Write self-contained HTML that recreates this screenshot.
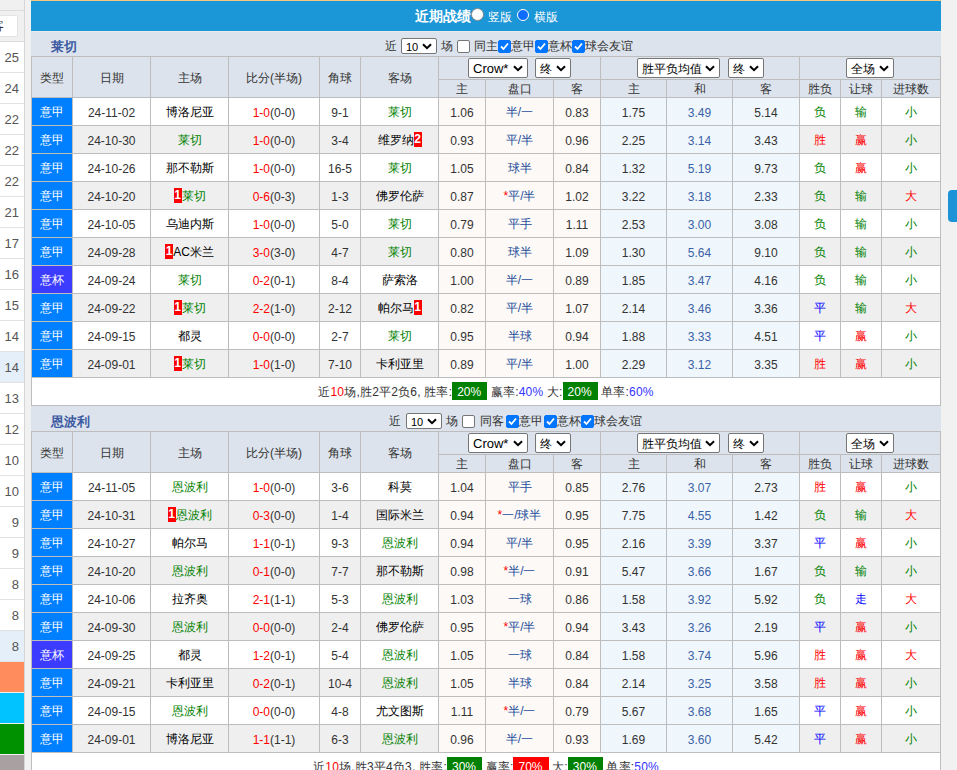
<!DOCTYPE html><html><head><meta charset="utf-8"><style>
*{margin:0;padding:0;box-sizing:border-box}
html,body{width:957px;height:770px;overflow:hidden;background:#f1f1f1;font-family:"Liberation Sans",sans-serif;font-size:12px;color:#333;position:relative}
div{position:absolute}
.c{text-align:center;white-space:nowrap;overflow:hidden;padding-top:1px}
.dt,.od,.od2{padding-top:2px}
.hd{color:#333}
.ty{color:#fff}
.tm{color:#000}
.hc{color:#1f4f9b}
.od2{color:#3a62a6}
.rc{font-style:normal;background:#f00;color:#fff;font-weight:bold;display:inline-block;line-height:15px;width:8px;text-align:center;vertical-align:1px}
.grid{left:31px;width:910px;background:#bdbdbd}
.bar{left:31px;width:910px;height:24px;background:#dce3ec}
.tname{left:51px;height:25px;line-height:32px;font-size:13px;font-weight:bold;color:#3d5ba3}
.tt{height:24px;line-height:30px;color:#333;white-space:nowrap}
.sel{height:16px;border:1px solid #767676;border-radius:2px;background:#fff;line-height:14px;padding-left:4px;color:#000;white-space:nowrap}
.sel span{position:relative;top:1px}
.sel svg{position:absolute;right:4px;top:50%;margin-top:-3px}
.cb{width:13px;height:13px;border:1px solid #767676;border-radius:2px;background:#fff}
.cb.on{background:#0075ff;border-color:#0075ff}
.cb svg{position:absolute;left:-1px;top:-1px}
.gbox{display:inline-block;background:#008000;color:#fff;padding:1px 6px 0 5px;height:18px;line-height:18px;vertical-align:top;position:relative;top:3px;font-size:12px;letter-spacing:0}
.sum{letter-spacing:0.2px;padding-top:1px}
.lp{left:0;width:24px;height:31px;line-height:31px;text-align:right;padding-right:5px;color:#555;font-size:13px;border-bottom:1px solid #e2e2e2;background:#fff}
</style></head><body>
<div style="left:0;top:0;width:24px;height:770px;background:#f0f0f0"></div>
<div style="left:0;top:10px;width:24px;height:1px;background:#dcdcdc"></div>
<div style="left:-10px;top:15px;width:28px;height:22px;background:#fff;border:1px solid #e4e4e4;border-radius:2px"></div>
<div style="left:-8px;top:15px;height:22px;line-height:22px;font-size:12px;color:#333">客</div>
<div style="left:0;top:41px;width:24px;height:1px;background:#dcdcdc"></div>
<div class="lp" style="top:42px;background:#fff;height:31px">25</div>
<div class="lp" style="top:73px;background:#fff;height:31px">24</div>
<div class="lp" style="top:104px;background:#fff;height:31px">22</div>
<div class="lp" style="top:135px;background:#fff;height:31px">22</div>
<div class="lp" style="top:166px;background:#fff;height:31px">22</div>
<div class="lp" style="top:197px;background:#fff;height:31px">21</div>
<div class="lp" style="top:228px;background:#fff;height:31px">17</div>
<div class="lp" style="top:259px;background:#fff;height:31px">16</div>
<div class="lp" style="top:290px;background:#fff;height:31px">15</div>
<div class="lp" style="top:321px;background:#fff;height:31px">14</div>
<div class="lp" style="top:352px;background:#e4effa;height:31px">14</div>
<div class="lp" style="top:383px;background:#fff;height:31px">13</div>
<div class="lp" style="top:414px;background:#fff;height:31px">12</div>
<div class="lp" style="top:445px;background:#fff;height:31px">10</div>
<div class="lp" style="top:476px;background:#fff;height:31px">10</div>
<div class="lp" style="top:507px;background:#fff;height:31px">9</div>
<div class="lp" style="top:538px;background:#fff;height:31px">9</div>
<div class="lp" style="top:569px;background:#fff;height:31px">8</div>
<div class="lp" style="top:600px;background:#fff;height:31px">8</div>
<div class="lp" style="top:631px;background:#e4effa;height:31px">8</div>
<div style="left:0;top:662px;width:24px;height:30px;background:#ff8c5c"></div>
<div style="left:0;top:693px;width:24px;height:30px;background:#00c3ff"></div>
<div style="left:0;top:724px;width:24px;height:30px;background:#009100"></div>
<div style="left:0;top:755px;width:24px;height:30px;background:#a9a1a1"></div>
<div style="left:24px;top:0;width:1px;height:770px;background:#d6d6d6"></div>
<div style="left:31px;top:0;width:910px;height:1px;background:#f6c77d"></div>
<div style="left:31px;top:1px;width:910px;height:30px;background:#1b96d6"></div>
<div style="left:415px;top:1px;height:30px;line-height:30px;font-size:14px;font-weight:bold;color:#fff;white-space:nowrap">近期战绩</div>
<div style="left:471px;top:8px;width:13px;height:13px;border-radius:50%;background:#fff;border:1px solid #888"></div>
<div style="left:488px;top:2px;height:30px;line-height:30px;font-size:12px;color:#fff;white-space:nowrap">竖版</div>
<div style="left:517px;top:9px;width:12px;height:12px;border-radius:50%;background:#0b6cff;border:1.5px solid #fff"></div>
<div style="left:534px;top:2px;height:30px;line-height:30px;font-size:12px;color:#fff;white-space:nowrap">横版</div>
<div class="bar" style="top:31px;height:25px"></div>
<div class="tname" style="top:31px;">莱切</div>
<div class="tt" style="left:385px;top:31px">近</div>
<div class="sel" style="left:401px;top:38px;width:36px;height:16px;line-height:14px;font-size:11px"><span>10</span><svg width="10" height="7" viewBox="0 0 10 7"><path d="M1 1.2 L5 5.2 L9 1.2" fill="none" stroke="#000" stroke-width="2"/></svg></div>
<div class="tt" style="left:441px;top:31px">场</div>
<div class="cb" style="left:457px;top:40px"></div>
<div class="tt" style="left:474px;top:31px">同主</div>
<div class="cb on" style="left:498px;top:40px"><svg width="13" height="13" viewBox="0 0 13 13"><path d="M3 6.5 L5.5 9 L10 3.5" fill="none" stroke="#fff" stroke-width="1.8"/></svg></div>
<div class="tt" style="left:511px;top:31px">意甲</div>
<div class="cb on" style="left:535px;top:40px"><svg width="13" height="13" viewBox="0 0 13 13"><path d="M3 6.5 L5.5 9 L10 3.5" fill="none" stroke="#fff" stroke-width="1.8"/></svg></div>
<div class="tt" style="left:548px;top:31px">意杯</div>
<div class="cb on" style="left:572px;top:40px"><svg width="13" height="13" viewBox="0 0 13 13"><path d="M3 6.5 L5.5 9 L10 3.5" fill="none" stroke="#fff" stroke-width="1.8"/></svg></div>
<div class="tt" style="left:585px;top:31px">球会友谊</div>
<div class="grid" style="top:56px;height:350px"></div>
<div class="c hd" style="left:32px;top:57px;width:40px;height:40px;line-height:40px;background:#dce3ec;">类型</div>
<div class="c hd" style="left:73px;top:57px;width:77px;height:40px;line-height:40px;background:#dce3ec;">日期</div>
<div class="c hd" style="left:151px;top:57px;width:77px;height:40px;line-height:40px;background:#dce3ec;">主场</div>
<div class="c hd" style="left:229px;top:57px;width:90px;height:40px;line-height:40px;background:#dce3ec;">比分(半场)</div>
<div class="c hd" style="left:320px;top:57px;width:40px;height:40px;line-height:40px;background:#dce3ec;">角球</div>
<div class="c hd" style="left:361px;top:57px;width:77px;height:40px;line-height:40px;background:#dce3ec;">客场</div>
<div class="c " style="left:439px;top:57px;width:161px;height:22px;line-height:22px;background:#dce3ec;"></div>
<div class="c " style="left:601px;top:57px;width:198px;height:22px;line-height:22px;background:#dce3ec;"></div>
<div class="c " style="left:800px;top:57px;width:140px;height:22px;line-height:22px;background:#dce3ec;"></div>
<div class="c hd" style="left:439px;top:80px;width:46px;height:17px;line-height:17px;background:#dce3ec;">主</div>
<div class="c hd" style="left:486px;top:80px;width:67px;height:17px;line-height:17px;background:#dce3ec;">盘口</div>
<div class="c hd" style="left:554px;top:80px;width:46px;height:17px;line-height:17px;background:#dce3ec;">客</div>
<div class="c hd" style="left:601px;top:80px;width:65px;height:17px;line-height:17px;background:#dce3ec;">主</div>
<div class="c hd" style="left:667px;top:80px;width:65px;height:17px;line-height:17px;background:#dce3ec;">和</div>
<div class="c hd" style="left:733px;top:80px;width:66px;height:17px;line-height:17px;background:#dce3ec;">客</div>
<div class="c hd" style="left:800px;top:80px;width:40px;height:17px;line-height:17px;background:#dce3ec;">胜负</div>
<div class="c hd" style="left:841px;top:80px;width:40px;height:17px;line-height:17px;background:#dce3ec;">让球</div>
<div class="c hd" style="left:882px;top:80px;width:58px;height:17px;line-height:17px;background:#dce3ec;">进球数</div>
<div class="c ty" style="left:32px;top:98px;width:40px;height:27px;line-height:27px;background:#0080ff;">意甲</div>
<div class="c dt" style="left:73px;top:98px;width:77px;height:27px;line-height:27px;background:#fff;">24-11-02</div>
<div class="c tm" style="left:151px;top:98px;width:77px;height:27px;line-height:27px;background:#fff;">博洛尼亚</div>
<div class="c dt" style="left:229px;top:98px;width:90px;height:27px;line-height:27px;background:#fff;"><span style="color:#f00">1-0</span>(0-0)</div>
<div class="c dt" style="left:320px;top:98px;width:40px;height:27px;line-height:27px;background:#fff;">9-1</div>
<div class="c tm" style="left:361px;top:98px;width:77px;height:27px;line-height:27px;background:#fff;"><span style="color:#008000">莱切</span></div>
<div class="c od" style="left:439px;top:98px;width:46px;height:27px;line-height:27px;background:#fdf9f6;">1.06</div>
<div class="c hc" style="left:486px;top:98px;width:67px;height:27px;line-height:27px;background:#fdf9f6;">半/一</div>
<div class="c od" style="left:554px;top:98px;width:46px;height:27px;line-height:27px;background:#fdf9f6;">0.83</div>
<div class="c od" style="left:601px;top:98px;width:65px;height:27px;line-height:27px;background:#f0f7fc;">1.75</div>
<div class="c od2" style="left:667px;top:98px;width:65px;height:27px;line-height:27px;background:#f0f7fc;">3.49</div>
<div class="c od" style="left:733px;top:98px;width:66px;height:27px;line-height:27px;background:#f0f7fc;">5.14</div>
<div class="c rs" style="left:800px;top:98px;width:40px;height:27px;line-height:27px;background:#fff;"><span style="color:#008000">负</span></div>
<div class="c rs" style="left:841px;top:98px;width:40px;height:27px;line-height:27px;background:#fff;"><span style="color:#008000">输</span></div>
<div class="c rs" style="left:882px;top:98px;width:58px;height:27px;line-height:27px;background:#fff;"><span style="color:#008000">小</span></div>
<div class="c ty" style="left:32px;top:126px;width:40px;height:27px;line-height:27px;background:#0080ff;">意甲</div>
<div class="c dt" style="left:73px;top:126px;width:77px;height:27px;line-height:27px;background:#efefef;">24-10-30</div>
<div class="c tm" style="left:151px;top:126px;width:77px;height:27px;line-height:27px;background:#efefef;"><span style="color:#008000">莱切</span></div>
<div class="c dt" style="left:229px;top:126px;width:90px;height:27px;line-height:27px;background:#efefef;"><span style="color:#f00">1-0</span>(0-0)</div>
<div class="c dt" style="left:320px;top:126px;width:40px;height:27px;line-height:27px;background:#efefef;">3-4</div>
<div class="c tm" style="left:361px;top:126px;width:77px;height:27px;line-height:27px;background:#efefef;">维罗纳<i class="rc">2</i></div>
<div class="c od" style="left:439px;top:126px;width:46px;height:27px;line-height:27px;background:#fdf9f6;">0.93</div>
<div class="c hc" style="left:486px;top:126px;width:67px;height:27px;line-height:27px;background:#fdf9f6;">平/半</div>
<div class="c od" style="left:554px;top:126px;width:46px;height:27px;line-height:27px;background:#fdf9f6;">0.96</div>
<div class="c od" style="left:601px;top:126px;width:65px;height:27px;line-height:27px;background:#f0f7fc;">2.25</div>
<div class="c od2" style="left:667px;top:126px;width:65px;height:27px;line-height:27px;background:#f0f7fc;">3.14</div>
<div class="c od" style="left:733px;top:126px;width:66px;height:27px;line-height:27px;background:#f0f7fc;">3.43</div>
<div class="c rs" style="left:800px;top:126px;width:40px;height:27px;line-height:27px;background:#efefef;"><span style="color:#f00">胜</span></div>
<div class="c rs" style="left:841px;top:126px;width:40px;height:27px;line-height:27px;background:#efefef;"><span style="color:#f00">赢</span></div>
<div class="c rs" style="left:882px;top:126px;width:58px;height:27px;line-height:27px;background:#efefef;"><span style="color:#008000">小</span></div>
<div class="c ty" style="left:32px;top:154px;width:40px;height:27px;line-height:27px;background:#0080ff;">意甲</div>
<div class="c dt" style="left:73px;top:154px;width:77px;height:27px;line-height:27px;background:#fff;">24-10-26</div>
<div class="c tm" style="left:151px;top:154px;width:77px;height:27px;line-height:27px;background:#fff;">那不勒斯</div>
<div class="c dt" style="left:229px;top:154px;width:90px;height:27px;line-height:27px;background:#fff;"><span style="color:#f00">1-0</span>(0-0)</div>
<div class="c dt" style="left:320px;top:154px;width:40px;height:27px;line-height:27px;background:#fff;">16-5</div>
<div class="c tm" style="left:361px;top:154px;width:77px;height:27px;line-height:27px;background:#fff;"><span style="color:#008000">莱切</span></div>
<div class="c od" style="left:439px;top:154px;width:46px;height:27px;line-height:27px;background:#fdf9f6;">1.05</div>
<div class="c hc" style="left:486px;top:154px;width:67px;height:27px;line-height:27px;background:#fdf9f6;">球半</div>
<div class="c od" style="left:554px;top:154px;width:46px;height:27px;line-height:27px;background:#fdf9f6;">0.84</div>
<div class="c od" style="left:601px;top:154px;width:65px;height:27px;line-height:27px;background:#f0f7fc;">1.32</div>
<div class="c od2" style="left:667px;top:154px;width:65px;height:27px;line-height:27px;background:#f0f7fc;">5.19</div>
<div class="c od" style="left:733px;top:154px;width:66px;height:27px;line-height:27px;background:#f0f7fc;">9.73</div>
<div class="c rs" style="left:800px;top:154px;width:40px;height:27px;line-height:27px;background:#fff;"><span style="color:#008000">负</span></div>
<div class="c rs" style="left:841px;top:154px;width:40px;height:27px;line-height:27px;background:#fff;"><span style="color:#f00">赢</span></div>
<div class="c rs" style="left:882px;top:154px;width:58px;height:27px;line-height:27px;background:#fff;"><span style="color:#008000">小</span></div>
<div class="c ty" style="left:32px;top:182px;width:40px;height:27px;line-height:27px;background:#0080ff;">意甲</div>
<div class="c dt" style="left:73px;top:182px;width:77px;height:27px;line-height:27px;background:#efefef;">24-10-20</div>
<div class="c tm" style="left:151px;top:182px;width:77px;height:27px;line-height:27px;background:#efefef;"><i class="rc">1</i><span style="color:#008000">莱切</span></div>
<div class="c dt" style="left:229px;top:182px;width:90px;height:27px;line-height:27px;background:#efefef;"><span style="color:#f00">0-6</span>(0-3)</div>
<div class="c dt" style="left:320px;top:182px;width:40px;height:27px;line-height:27px;background:#efefef;">1-3</div>
<div class="c tm" style="left:361px;top:182px;width:77px;height:27px;line-height:27px;background:#efefef;">佛罗伦萨</div>
<div class="c od" style="left:439px;top:182px;width:46px;height:27px;line-height:27px;background:#fdf9f6;">0.87</div>
<div class="c hc" style="left:486px;top:182px;width:67px;height:27px;line-height:27px;background:#fdf9f6;"><span style="color:#f00">*</span>平/半</div>
<div class="c od" style="left:554px;top:182px;width:46px;height:27px;line-height:27px;background:#fdf9f6;">1.02</div>
<div class="c od" style="left:601px;top:182px;width:65px;height:27px;line-height:27px;background:#f0f7fc;">3.22</div>
<div class="c od2" style="left:667px;top:182px;width:65px;height:27px;line-height:27px;background:#f0f7fc;">3.18</div>
<div class="c od" style="left:733px;top:182px;width:66px;height:27px;line-height:27px;background:#f0f7fc;">2.33</div>
<div class="c rs" style="left:800px;top:182px;width:40px;height:27px;line-height:27px;background:#efefef;"><span style="color:#008000">负</span></div>
<div class="c rs" style="left:841px;top:182px;width:40px;height:27px;line-height:27px;background:#efefef;"><span style="color:#008000">输</span></div>
<div class="c rs" style="left:882px;top:182px;width:58px;height:27px;line-height:27px;background:#efefef;"><span style="color:#f00">大</span></div>
<div class="c ty" style="left:32px;top:210px;width:40px;height:27px;line-height:27px;background:#0080ff;">意甲</div>
<div class="c dt" style="left:73px;top:210px;width:77px;height:27px;line-height:27px;background:#fff;">24-10-05</div>
<div class="c tm" style="left:151px;top:210px;width:77px;height:27px;line-height:27px;background:#fff;">乌迪内斯</div>
<div class="c dt" style="left:229px;top:210px;width:90px;height:27px;line-height:27px;background:#fff;"><span style="color:#f00">1-0</span>(0-0)</div>
<div class="c dt" style="left:320px;top:210px;width:40px;height:27px;line-height:27px;background:#fff;">5-0</div>
<div class="c tm" style="left:361px;top:210px;width:77px;height:27px;line-height:27px;background:#fff;"><span style="color:#008000">莱切</span></div>
<div class="c od" style="left:439px;top:210px;width:46px;height:27px;line-height:27px;background:#fdf9f6;">0.79</div>
<div class="c hc" style="left:486px;top:210px;width:67px;height:27px;line-height:27px;background:#fdf9f6;">平手</div>
<div class="c od" style="left:554px;top:210px;width:46px;height:27px;line-height:27px;background:#fdf9f6;">1.11</div>
<div class="c od" style="left:601px;top:210px;width:65px;height:27px;line-height:27px;background:#f0f7fc;">2.53</div>
<div class="c od2" style="left:667px;top:210px;width:65px;height:27px;line-height:27px;background:#f0f7fc;">3.00</div>
<div class="c od" style="left:733px;top:210px;width:66px;height:27px;line-height:27px;background:#f0f7fc;">3.08</div>
<div class="c rs" style="left:800px;top:210px;width:40px;height:27px;line-height:27px;background:#fff;"><span style="color:#008000">负</span></div>
<div class="c rs" style="left:841px;top:210px;width:40px;height:27px;line-height:27px;background:#fff;"><span style="color:#008000">输</span></div>
<div class="c rs" style="left:882px;top:210px;width:58px;height:27px;line-height:27px;background:#fff;"><span style="color:#008000">小</span></div>
<div class="c ty" style="left:32px;top:238px;width:40px;height:27px;line-height:27px;background:#0080ff;">意甲</div>
<div class="c dt" style="left:73px;top:238px;width:77px;height:27px;line-height:27px;background:#efefef;">24-09-28</div>
<div class="c tm" style="left:151px;top:238px;width:77px;height:27px;line-height:27px;background:#efefef;"><i class="rc">1</i>AC米兰</div>
<div class="c dt" style="left:229px;top:238px;width:90px;height:27px;line-height:27px;background:#efefef;"><span style="color:#f00">3-0</span>(3-0)</div>
<div class="c dt" style="left:320px;top:238px;width:40px;height:27px;line-height:27px;background:#efefef;">4-7</div>
<div class="c tm" style="left:361px;top:238px;width:77px;height:27px;line-height:27px;background:#efefef;"><span style="color:#008000">莱切</span></div>
<div class="c od" style="left:439px;top:238px;width:46px;height:27px;line-height:27px;background:#fdf9f6;">0.80</div>
<div class="c hc" style="left:486px;top:238px;width:67px;height:27px;line-height:27px;background:#fdf9f6;">球半</div>
<div class="c od" style="left:554px;top:238px;width:46px;height:27px;line-height:27px;background:#fdf9f6;">1.09</div>
<div class="c od" style="left:601px;top:238px;width:65px;height:27px;line-height:27px;background:#f0f7fc;">1.30</div>
<div class="c od2" style="left:667px;top:238px;width:65px;height:27px;line-height:27px;background:#f0f7fc;">5.64</div>
<div class="c od" style="left:733px;top:238px;width:66px;height:27px;line-height:27px;background:#f0f7fc;">9.10</div>
<div class="c rs" style="left:800px;top:238px;width:40px;height:27px;line-height:27px;background:#efefef;"><span style="color:#008000">负</span></div>
<div class="c rs" style="left:841px;top:238px;width:40px;height:27px;line-height:27px;background:#efefef;"><span style="color:#008000">输</span></div>
<div class="c rs" style="left:882px;top:238px;width:58px;height:27px;line-height:27px;background:#efefef;"><span style="color:#008000">小</span></div>
<div class="c ty" style="left:32px;top:266px;width:40px;height:27px;line-height:27px;background:#3c3cff;">意杯</div>
<div class="c dt" style="left:73px;top:266px;width:77px;height:27px;line-height:27px;background:#fff;">24-09-24</div>
<div class="c tm" style="left:151px;top:266px;width:77px;height:27px;line-height:27px;background:#fff;"><span style="color:#008000">莱切</span></div>
<div class="c dt" style="left:229px;top:266px;width:90px;height:27px;line-height:27px;background:#fff;"><span style="color:#f00">0-2</span>(0-1)</div>
<div class="c dt" style="left:320px;top:266px;width:40px;height:27px;line-height:27px;background:#fff;">8-4</div>
<div class="c tm" style="left:361px;top:266px;width:77px;height:27px;line-height:27px;background:#fff;">萨索洛</div>
<div class="c od" style="left:439px;top:266px;width:46px;height:27px;line-height:27px;background:#fdf9f6;">1.00</div>
<div class="c hc" style="left:486px;top:266px;width:67px;height:27px;line-height:27px;background:#fdf9f6;">半/一</div>
<div class="c od" style="left:554px;top:266px;width:46px;height:27px;line-height:27px;background:#fdf9f6;">0.89</div>
<div class="c od" style="left:601px;top:266px;width:65px;height:27px;line-height:27px;background:#f0f7fc;">1.85</div>
<div class="c od2" style="left:667px;top:266px;width:65px;height:27px;line-height:27px;background:#f0f7fc;">3.47</div>
<div class="c od" style="left:733px;top:266px;width:66px;height:27px;line-height:27px;background:#f0f7fc;">4.16</div>
<div class="c rs" style="left:800px;top:266px;width:40px;height:27px;line-height:27px;background:#fff;"><span style="color:#008000">负</span></div>
<div class="c rs" style="left:841px;top:266px;width:40px;height:27px;line-height:27px;background:#fff;"><span style="color:#008000">输</span></div>
<div class="c rs" style="left:882px;top:266px;width:58px;height:27px;line-height:27px;background:#fff;"><span style="color:#008000">小</span></div>
<div class="c ty" style="left:32px;top:294px;width:40px;height:27px;line-height:27px;background:#0080ff;">意甲</div>
<div class="c dt" style="left:73px;top:294px;width:77px;height:27px;line-height:27px;background:#efefef;">24-09-22</div>
<div class="c tm" style="left:151px;top:294px;width:77px;height:27px;line-height:27px;background:#efefef;"><i class="rc">1</i><span style="color:#008000">莱切</span></div>
<div class="c dt" style="left:229px;top:294px;width:90px;height:27px;line-height:27px;background:#efefef;"><span style="color:#f00">2-2</span>(1-0)</div>
<div class="c dt" style="left:320px;top:294px;width:40px;height:27px;line-height:27px;background:#efefef;">2-12</div>
<div class="c tm" style="left:361px;top:294px;width:77px;height:27px;line-height:27px;background:#efefef;">帕尔马<i class="rc">1</i></div>
<div class="c od" style="left:439px;top:294px;width:46px;height:27px;line-height:27px;background:#fdf9f6;">0.82</div>
<div class="c hc" style="left:486px;top:294px;width:67px;height:27px;line-height:27px;background:#fdf9f6;">平/半</div>
<div class="c od" style="left:554px;top:294px;width:46px;height:27px;line-height:27px;background:#fdf9f6;">1.07</div>
<div class="c od" style="left:601px;top:294px;width:65px;height:27px;line-height:27px;background:#f0f7fc;">2.14</div>
<div class="c od2" style="left:667px;top:294px;width:65px;height:27px;line-height:27px;background:#f0f7fc;">3.46</div>
<div class="c od" style="left:733px;top:294px;width:66px;height:27px;line-height:27px;background:#f0f7fc;">3.36</div>
<div class="c rs" style="left:800px;top:294px;width:40px;height:27px;line-height:27px;background:#efefef;"><span style="color:#00f">平</span></div>
<div class="c rs" style="left:841px;top:294px;width:40px;height:27px;line-height:27px;background:#efefef;"><span style="color:#008000">输</span></div>
<div class="c rs" style="left:882px;top:294px;width:58px;height:27px;line-height:27px;background:#efefef;"><span style="color:#f00">大</span></div>
<div class="c ty" style="left:32px;top:322px;width:40px;height:27px;line-height:27px;background:#0080ff;">意甲</div>
<div class="c dt" style="left:73px;top:322px;width:77px;height:27px;line-height:27px;background:#fff;">24-09-15</div>
<div class="c tm" style="left:151px;top:322px;width:77px;height:27px;line-height:27px;background:#fff;">都灵</div>
<div class="c dt" style="left:229px;top:322px;width:90px;height:27px;line-height:27px;background:#fff;"><span style="color:#f00">0-0</span>(0-0)</div>
<div class="c dt" style="left:320px;top:322px;width:40px;height:27px;line-height:27px;background:#fff;">2-7</div>
<div class="c tm" style="left:361px;top:322px;width:77px;height:27px;line-height:27px;background:#fff;"><span style="color:#008000">莱切</span></div>
<div class="c od" style="left:439px;top:322px;width:46px;height:27px;line-height:27px;background:#fdf9f6;">0.95</div>
<div class="c hc" style="left:486px;top:322px;width:67px;height:27px;line-height:27px;background:#fdf9f6;">半球</div>
<div class="c od" style="left:554px;top:322px;width:46px;height:27px;line-height:27px;background:#fdf9f6;">0.94</div>
<div class="c od" style="left:601px;top:322px;width:65px;height:27px;line-height:27px;background:#f0f7fc;">1.88</div>
<div class="c od2" style="left:667px;top:322px;width:65px;height:27px;line-height:27px;background:#f0f7fc;">3.33</div>
<div class="c od" style="left:733px;top:322px;width:66px;height:27px;line-height:27px;background:#f0f7fc;">4.51</div>
<div class="c rs" style="left:800px;top:322px;width:40px;height:27px;line-height:27px;background:#fff;"><span style="color:#00f">平</span></div>
<div class="c rs" style="left:841px;top:322px;width:40px;height:27px;line-height:27px;background:#fff;"><span style="color:#f00">赢</span></div>
<div class="c rs" style="left:882px;top:322px;width:58px;height:27px;line-height:27px;background:#fff;"><span style="color:#008000">小</span></div>
<div class="c ty" style="left:32px;top:350px;width:40px;height:27px;line-height:27px;background:#0080ff;">意甲</div>
<div class="c dt" style="left:73px;top:350px;width:77px;height:27px;line-height:27px;background:#efefef;">24-09-01</div>
<div class="c tm" style="left:151px;top:350px;width:77px;height:27px;line-height:27px;background:#efefef;"><i class="rc">1</i><span style="color:#008000">莱切</span></div>
<div class="c dt" style="left:229px;top:350px;width:90px;height:27px;line-height:27px;background:#efefef;"><span style="color:#f00">1-0</span>(1-0)</div>
<div class="c dt" style="left:320px;top:350px;width:40px;height:27px;line-height:27px;background:#efefef;">7-10</div>
<div class="c tm" style="left:361px;top:350px;width:77px;height:27px;line-height:27px;background:#efefef;">卡利亚里</div>
<div class="c od" style="left:439px;top:350px;width:46px;height:27px;line-height:27px;background:#fdf9f6;">0.89</div>
<div class="c hc" style="left:486px;top:350px;width:67px;height:27px;line-height:27px;background:#fdf9f6;">平/半</div>
<div class="c od" style="left:554px;top:350px;width:46px;height:27px;line-height:27px;background:#fdf9f6;">1.00</div>
<div class="c od" style="left:601px;top:350px;width:65px;height:27px;line-height:27px;background:#f0f7fc;">2.29</div>
<div class="c od2" style="left:667px;top:350px;width:65px;height:27px;line-height:27px;background:#f0f7fc;">3.12</div>
<div class="c od" style="left:733px;top:350px;width:66px;height:27px;line-height:27px;background:#f0f7fc;">3.35</div>
<div class="c rs" style="left:800px;top:350px;width:40px;height:27px;line-height:27px;background:#efefef;"><span style="color:#f00">胜</span></div>
<div class="c rs" style="left:841px;top:350px;width:40px;height:27px;line-height:27px;background:#efefef;"><span style="color:#f00">赢</span></div>
<div class="c rs" style="left:882px;top:350px;width:58px;height:27px;line-height:27px;background:#efefef;"><span style="color:#008000">小</span></div>
<div class="c sum" style="left:32px;top:378px;width:908px;height:27px;line-height:27px;background:#fff;">近<span style="color:#f00">10</span>场,胜2平2负6, 胜率:<span class="gbox">20%</span> 赢率:<span style="color:#33f">40%</span> 大:<span class="gbox">20%</span> 单率:<span style="color:#33f">60%</span></div>
<div class="bar" style="top:406px;height:25px"></div>
<div class="tname" style="top:406px;">恩波利</div>
<div class="tt" style="left:389px;top:406px">近</div>
<div class="sel" style="left:406px;top:413px;width:36px;height:16px;line-height:14px;font-size:11px"><span>10</span><svg width="10" height="7" viewBox="0 0 10 7"><path d="M1 1.2 L5 5.2 L9 1.2" fill="none" stroke="#000" stroke-width="2"/></svg></div>
<div class="tt" style="left:446px;top:406px">场</div>
<div class="cb" style="left:462px;top:415px"></div>
<div class="tt" style="left:480px;top:406px">同客</div>
<div class="cb on" style="left:506px;top:415px"><svg width="13" height="13" viewBox="0 0 13 13"><path d="M3 6.5 L5.5 9 L10 3.5" fill="none" stroke="#fff" stroke-width="1.8"/></svg></div>
<div class="tt" style="left:519px;top:406px">意甲</div>
<div class="cb on" style="left:544px;top:415px"><svg width="13" height="13" viewBox="0 0 13 13"><path d="M3 6.5 L5.5 9 L10 3.5" fill="none" stroke="#fff" stroke-width="1.8"/></svg></div>
<div class="tt" style="left:557px;top:406px">意杯</div>
<div class="cb on" style="left:581px;top:415px"><svg width="13" height="13" viewBox="0 0 13 13"><path d="M3 6.5 L5.5 9 L10 3.5" fill="none" stroke="#fff" stroke-width="1.8"/></svg></div>
<div class="tt" style="left:594px;top:406px">球会友谊</div>
<div class="grid" style="top:431px;height:350px"></div>
<div class="c hd" style="left:32px;top:432px;width:40px;height:40px;line-height:40px;background:#dce3ec;">类型</div>
<div class="c hd" style="left:73px;top:432px;width:77px;height:40px;line-height:40px;background:#dce3ec;">日期</div>
<div class="c hd" style="left:151px;top:432px;width:77px;height:40px;line-height:40px;background:#dce3ec;">主场</div>
<div class="c hd" style="left:229px;top:432px;width:90px;height:40px;line-height:40px;background:#dce3ec;">比分(半场)</div>
<div class="c hd" style="left:320px;top:432px;width:40px;height:40px;line-height:40px;background:#dce3ec;">角球</div>
<div class="c hd" style="left:361px;top:432px;width:77px;height:40px;line-height:40px;background:#dce3ec;">客场</div>
<div class="c " style="left:439px;top:432px;width:161px;height:22px;line-height:22px;background:#dce3ec;"></div>
<div class="c " style="left:601px;top:432px;width:198px;height:22px;line-height:22px;background:#dce3ec;"></div>
<div class="c " style="left:800px;top:432px;width:140px;height:22px;line-height:22px;background:#dce3ec;"></div>
<div class="c hd" style="left:439px;top:455px;width:46px;height:17px;line-height:17px;background:#dce3ec;">主</div>
<div class="c hd" style="left:486px;top:455px;width:67px;height:17px;line-height:17px;background:#dce3ec;">盘口</div>
<div class="c hd" style="left:554px;top:455px;width:46px;height:17px;line-height:17px;background:#dce3ec;">客</div>
<div class="c hd" style="left:601px;top:455px;width:65px;height:17px;line-height:17px;background:#dce3ec;">主</div>
<div class="c hd" style="left:667px;top:455px;width:65px;height:17px;line-height:17px;background:#dce3ec;">和</div>
<div class="c hd" style="left:733px;top:455px;width:66px;height:17px;line-height:17px;background:#dce3ec;">客</div>
<div class="c hd" style="left:800px;top:455px;width:40px;height:17px;line-height:17px;background:#dce3ec;">胜负</div>
<div class="c hd" style="left:841px;top:455px;width:40px;height:17px;line-height:17px;background:#dce3ec;">让球</div>
<div class="c hd" style="left:882px;top:455px;width:58px;height:17px;line-height:17px;background:#dce3ec;">进球数</div>
<div class="c ty" style="left:32px;top:473px;width:40px;height:27px;line-height:27px;background:#0080ff;">意甲</div>
<div class="c dt" style="left:73px;top:473px;width:77px;height:27px;line-height:27px;background:#fff;">24-11-05</div>
<div class="c tm" style="left:151px;top:473px;width:77px;height:27px;line-height:27px;background:#fff;"><span style="color:#008000">恩波利</span></div>
<div class="c dt" style="left:229px;top:473px;width:90px;height:27px;line-height:27px;background:#fff;"><span style="color:#f00">1-0</span>(0-0)</div>
<div class="c dt" style="left:320px;top:473px;width:40px;height:27px;line-height:27px;background:#fff;">3-6</div>
<div class="c tm" style="left:361px;top:473px;width:77px;height:27px;line-height:27px;background:#fff;">科莫</div>
<div class="c od" style="left:439px;top:473px;width:46px;height:27px;line-height:27px;background:#fdf9f6;">1.04</div>
<div class="c hc" style="left:486px;top:473px;width:67px;height:27px;line-height:27px;background:#fdf9f6;">平手</div>
<div class="c od" style="left:554px;top:473px;width:46px;height:27px;line-height:27px;background:#fdf9f6;">0.85</div>
<div class="c od" style="left:601px;top:473px;width:65px;height:27px;line-height:27px;background:#f0f7fc;">2.76</div>
<div class="c od2" style="left:667px;top:473px;width:65px;height:27px;line-height:27px;background:#f0f7fc;">3.07</div>
<div class="c od" style="left:733px;top:473px;width:66px;height:27px;line-height:27px;background:#f0f7fc;">2.73</div>
<div class="c rs" style="left:800px;top:473px;width:40px;height:27px;line-height:27px;background:#fff;"><span style="color:#f00">胜</span></div>
<div class="c rs" style="left:841px;top:473px;width:40px;height:27px;line-height:27px;background:#fff;"><span style="color:#f00">赢</span></div>
<div class="c rs" style="left:882px;top:473px;width:58px;height:27px;line-height:27px;background:#fff;"><span style="color:#008000">小</span></div>
<div class="c ty" style="left:32px;top:501px;width:40px;height:27px;line-height:27px;background:#0080ff;">意甲</div>
<div class="c dt" style="left:73px;top:501px;width:77px;height:27px;line-height:27px;background:#efefef;">24-10-31</div>
<div class="c tm" style="left:151px;top:501px;width:77px;height:27px;line-height:27px;background:#efefef;"><i class="rc">1</i><span style="color:#008000">恩波利</span></div>
<div class="c dt" style="left:229px;top:501px;width:90px;height:27px;line-height:27px;background:#efefef;"><span style="color:#f00">0-3</span>(0-0)</div>
<div class="c dt" style="left:320px;top:501px;width:40px;height:27px;line-height:27px;background:#efefef;">1-4</div>
<div class="c tm" style="left:361px;top:501px;width:77px;height:27px;line-height:27px;background:#efefef;">国际米兰</div>
<div class="c od" style="left:439px;top:501px;width:46px;height:27px;line-height:27px;background:#fdf9f6;">0.94</div>
<div class="c hc" style="left:486px;top:501px;width:67px;height:27px;line-height:27px;background:#fdf9f6;"><span style="color:#f00">*</span>一/球半</div>
<div class="c od" style="left:554px;top:501px;width:46px;height:27px;line-height:27px;background:#fdf9f6;">0.95</div>
<div class="c od" style="left:601px;top:501px;width:65px;height:27px;line-height:27px;background:#f0f7fc;">7.75</div>
<div class="c od2" style="left:667px;top:501px;width:65px;height:27px;line-height:27px;background:#f0f7fc;">4.55</div>
<div class="c od" style="left:733px;top:501px;width:66px;height:27px;line-height:27px;background:#f0f7fc;">1.42</div>
<div class="c rs" style="left:800px;top:501px;width:40px;height:27px;line-height:27px;background:#efefef;"><span style="color:#008000">负</span></div>
<div class="c rs" style="left:841px;top:501px;width:40px;height:27px;line-height:27px;background:#efefef;"><span style="color:#008000">输</span></div>
<div class="c rs" style="left:882px;top:501px;width:58px;height:27px;line-height:27px;background:#efefef;"><span style="color:#f00">大</span></div>
<div class="c ty" style="left:32px;top:529px;width:40px;height:27px;line-height:27px;background:#0080ff;">意甲</div>
<div class="c dt" style="left:73px;top:529px;width:77px;height:27px;line-height:27px;background:#fff;">24-10-27</div>
<div class="c tm" style="left:151px;top:529px;width:77px;height:27px;line-height:27px;background:#fff;">帕尔马</div>
<div class="c dt" style="left:229px;top:529px;width:90px;height:27px;line-height:27px;background:#fff;"><span style="color:#f00">1-1</span>(0-1)</div>
<div class="c dt" style="left:320px;top:529px;width:40px;height:27px;line-height:27px;background:#fff;">9-3</div>
<div class="c tm" style="left:361px;top:529px;width:77px;height:27px;line-height:27px;background:#fff;"><span style="color:#008000">恩波利</span></div>
<div class="c od" style="left:439px;top:529px;width:46px;height:27px;line-height:27px;background:#fdf9f6;">0.94</div>
<div class="c hc" style="left:486px;top:529px;width:67px;height:27px;line-height:27px;background:#fdf9f6;">平/半</div>
<div class="c od" style="left:554px;top:529px;width:46px;height:27px;line-height:27px;background:#fdf9f6;">0.95</div>
<div class="c od" style="left:601px;top:529px;width:65px;height:27px;line-height:27px;background:#f0f7fc;">2.16</div>
<div class="c od2" style="left:667px;top:529px;width:65px;height:27px;line-height:27px;background:#f0f7fc;">3.39</div>
<div class="c od" style="left:733px;top:529px;width:66px;height:27px;line-height:27px;background:#f0f7fc;">3.37</div>
<div class="c rs" style="left:800px;top:529px;width:40px;height:27px;line-height:27px;background:#fff;"><span style="color:#00f">平</span></div>
<div class="c rs" style="left:841px;top:529px;width:40px;height:27px;line-height:27px;background:#fff;"><span style="color:#f00">赢</span></div>
<div class="c rs" style="left:882px;top:529px;width:58px;height:27px;line-height:27px;background:#fff;"><span style="color:#008000">小</span></div>
<div class="c ty" style="left:32px;top:557px;width:40px;height:27px;line-height:27px;background:#0080ff;">意甲</div>
<div class="c dt" style="left:73px;top:557px;width:77px;height:27px;line-height:27px;background:#efefef;">24-10-20</div>
<div class="c tm" style="left:151px;top:557px;width:77px;height:27px;line-height:27px;background:#efefef;"><span style="color:#008000">恩波利</span></div>
<div class="c dt" style="left:229px;top:557px;width:90px;height:27px;line-height:27px;background:#efefef;"><span style="color:#f00">0-1</span>(0-0)</div>
<div class="c dt" style="left:320px;top:557px;width:40px;height:27px;line-height:27px;background:#efefef;">7-7</div>
<div class="c tm" style="left:361px;top:557px;width:77px;height:27px;line-height:27px;background:#efefef;">那不勒斯</div>
<div class="c od" style="left:439px;top:557px;width:46px;height:27px;line-height:27px;background:#fdf9f6;">0.98</div>
<div class="c hc" style="left:486px;top:557px;width:67px;height:27px;line-height:27px;background:#fdf9f6;"><span style="color:#f00">*</span>半/一</div>
<div class="c od" style="left:554px;top:557px;width:46px;height:27px;line-height:27px;background:#fdf9f6;">0.91</div>
<div class="c od" style="left:601px;top:557px;width:65px;height:27px;line-height:27px;background:#f0f7fc;">5.47</div>
<div class="c od2" style="left:667px;top:557px;width:65px;height:27px;line-height:27px;background:#f0f7fc;">3.66</div>
<div class="c od" style="left:733px;top:557px;width:66px;height:27px;line-height:27px;background:#f0f7fc;">1.67</div>
<div class="c rs" style="left:800px;top:557px;width:40px;height:27px;line-height:27px;background:#efefef;"><span style="color:#008000">负</span></div>
<div class="c rs" style="left:841px;top:557px;width:40px;height:27px;line-height:27px;background:#efefef;"><span style="color:#008000">输</span></div>
<div class="c rs" style="left:882px;top:557px;width:58px;height:27px;line-height:27px;background:#efefef;"><span style="color:#008000">小</span></div>
<div class="c ty" style="left:32px;top:585px;width:40px;height:27px;line-height:27px;background:#0080ff;">意甲</div>
<div class="c dt" style="left:73px;top:585px;width:77px;height:27px;line-height:27px;background:#fff;">24-10-06</div>
<div class="c tm" style="left:151px;top:585px;width:77px;height:27px;line-height:27px;background:#fff;">拉齐奥</div>
<div class="c dt" style="left:229px;top:585px;width:90px;height:27px;line-height:27px;background:#fff;"><span style="color:#f00">2-1</span>(1-1)</div>
<div class="c dt" style="left:320px;top:585px;width:40px;height:27px;line-height:27px;background:#fff;">5-3</div>
<div class="c tm" style="left:361px;top:585px;width:77px;height:27px;line-height:27px;background:#fff;"><span style="color:#008000">恩波利</span></div>
<div class="c od" style="left:439px;top:585px;width:46px;height:27px;line-height:27px;background:#fdf9f6;">1.03</div>
<div class="c hc" style="left:486px;top:585px;width:67px;height:27px;line-height:27px;background:#fdf9f6;">一球</div>
<div class="c od" style="left:554px;top:585px;width:46px;height:27px;line-height:27px;background:#fdf9f6;">0.86</div>
<div class="c od" style="left:601px;top:585px;width:65px;height:27px;line-height:27px;background:#f0f7fc;">1.58</div>
<div class="c od2" style="left:667px;top:585px;width:65px;height:27px;line-height:27px;background:#f0f7fc;">3.92</div>
<div class="c od" style="left:733px;top:585px;width:66px;height:27px;line-height:27px;background:#f0f7fc;">5.92</div>
<div class="c rs" style="left:800px;top:585px;width:40px;height:27px;line-height:27px;background:#fff;"><span style="color:#008000">负</span></div>
<div class="c rs" style="left:841px;top:585px;width:40px;height:27px;line-height:27px;background:#fff;"><span style="color:#00f">走</span></div>
<div class="c rs" style="left:882px;top:585px;width:58px;height:27px;line-height:27px;background:#fff;"><span style="color:#f00">大</span></div>
<div class="c ty" style="left:32px;top:613px;width:40px;height:27px;line-height:27px;background:#0080ff;">意甲</div>
<div class="c dt" style="left:73px;top:613px;width:77px;height:27px;line-height:27px;background:#efefef;">24-09-30</div>
<div class="c tm" style="left:151px;top:613px;width:77px;height:27px;line-height:27px;background:#efefef;"><span style="color:#008000">恩波利</span></div>
<div class="c dt" style="left:229px;top:613px;width:90px;height:27px;line-height:27px;background:#efefef;"><span style="color:#f00">0-0</span>(0-0)</div>
<div class="c dt" style="left:320px;top:613px;width:40px;height:27px;line-height:27px;background:#efefef;">2-4</div>
<div class="c tm" style="left:361px;top:613px;width:77px;height:27px;line-height:27px;background:#efefef;">佛罗伦萨</div>
<div class="c od" style="left:439px;top:613px;width:46px;height:27px;line-height:27px;background:#fdf9f6;">0.95</div>
<div class="c hc" style="left:486px;top:613px;width:67px;height:27px;line-height:27px;background:#fdf9f6;"><span style="color:#f00">*</span>平/半</div>
<div class="c od" style="left:554px;top:613px;width:46px;height:27px;line-height:27px;background:#fdf9f6;">0.94</div>
<div class="c od" style="left:601px;top:613px;width:65px;height:27px;line-height:27px;background:#f0f7fc;">3.43</div>
<div class="c od2" style="left:667px;top:613px;width:65px;height:27px;line-height:27px;background:#f0f7fc;">3.26</div>
<div class="c od" style="left:733px;top:613px;width:66px;height:27px;line-height:27px;background:#f0f7fc;">2.19</div>
<div class="c rs" style="left:800px;top:613px;width:40px;height:27px;line-height:27px;background:#efefef;"><span style="color:#00f">平</span></div>
<div class="c rs" style="left:841px;top:613px;width:40px;height:27px;line-height:27px;background:#efefef;"><span style="color:#f00">赢</span></div>
<div class="c rs" style="left:882px;top:613px;width:58px;height:27px;line-height:27px;background:#efefef;"><span style="color:#008000">小</span></div>
<div class="c ty" style="left:32px;top:641px;width:40px;height:27px;line-height:27px;background:#3c3cff;">意杯</div>
<div class="c dt" style="left:73px;top:641px;width:77px;height:27px;line-height:27px;background:#fff;">24-09-25</div>
<div class="c tm" style="left:151px;top:641px;width:77px;height:27px;line-height:27px;background:#fff;">都灵</div>
<div class="c dt" style="left:229px;top:641px;width:90px;height:27px;line-height:27px;background:#fff;"><span style="color:#f00">1-2</span>(0-1)</div>
<div class="c dt" style="left:320px;top:641px;width:40px;height:27px;line-height:27px;background:#fff;">5-4</div>
<div class="c tm" style="left:361px;top:641px;width:77px;height:27px;line-height:27px;background:#fff;"><span style="color:#008000">恩波利</span></div>
<div class="c od" style="left:439px;top:641px;width:46px;height:27px;line-height:27px;background:#fdf9f6;">1.05</div>
<div class="c hc" style="left:486px;top:641px;width:67px;height:27px;line-height:27px;background:#fdf9f6;">一球</div>
<div class="c od" style="left:554px;top:641px;width:46px;height:27px;line-height:27px;background:#fdf9f6;">0.84</div>
<div class="c od" style="left:601px;top:641px;width:65px;height:27px;line-height:27px;background:#f0f7fc;">1.58</div>
<div class="c od2" style="left:667px;top:641px;width:65px;height:27px;line-height:27px;background:#f0f7fc;">3.74</div>
<div class="c od" style="left:733px;top:641px;width:66px;height:27px;line-height:27px;background:#f0f7fc;">5.96</div>
<div class="c rs" style="left:800px;top:641px;width:40px;height:27px;line-height:27px;background:#fff;"><span style="color:#f00">胜</span></div>
<div class="c rs" style="left:841px;top:641px;width:40px;height:27px;line-height:27px;background:#fff;"><span style="color:#f00">赢</span></div>
<div class="c rs" style="left:882px;top:641px;width:58px;height:27px;line-height:27px;background:#fff;"><span style="color:#f00">大</span></div>
<div class="c ty" style="left:32px;top:669px;width:40px;height:27px;line-height:27px;background:#0080ff;">意甲</div>
<div class="c dt" style="left:73px;top:669px;width:77px;height:27px;line-height:27px;background:#efefef;">24-09-21</div>
<div class="c tm" style="left:151px;top:669px;width:77px;height:27px;line-height:27px;background:#efefef;">卡利亚里</div>
<div class="c dt" style="left:229px;top:669px;width:90px;height:27px;line-height:27px;background:#efefef;"><span style="color:#f00">0-2</span>(0-1)</div>
<div class="c dt" style="left:320px;top:669px;width:40px;height:27px;line-height:27px;background:#efefef;">10-4</div>
<div class="c tm" style="left:361px;top:669px;width:77px;height:27px;line-height:27px;background:#efefef;"><span style="color:#008000">恩波利</span></div>
<div class="c od" style="left:439px;top:669px;width:46px;height:27px;line-height:27px;background:#fdf9f6;">1.05</div>
<div class="c hc" style="left:486px;top:669px;width:67px;height:27px;line-height:27px;background:#fdf9f6;">半球</div>
<div class="c od" style="left:554px;top:669px;width:46px;height:27px;line-height:27px;background:#fdf9f6;">0.84</div>
<div class="c od" style="left:601px;top:669px;width:65px;height:27px;line-height:27px;background:#f0f7fc;">2.14</div>
<div class="c od2" style="left:667px;top:669px;width:65px;height:27px;line-height:27px;background:#f0f7fc;">3.25</div>
<div class="c od" style="left:733px;top:669px;width:66px;height:27px;line-height:27px;background:#f0f7fc;">3.58</div>
<div class="c rs" style="left:800px;top:669px;width:40px;height:27px;line-height:27px;background:#efefef;"><span style="color:#f00">胜</span></div>
<div class="c rs" style="left:841px;top:669px;width:40px;height:27px;line-height:27px;background:#efefef;"><span style="color:#f00">赢</span></div>
<div class="c rs" style="left:882px;top:669px;width:58px;height:27px;line-height:27px;background:#efefef;"><span style="color:#008000">小</span></div>
<div class="c ty" style="left:32px;top:697px;width:40px;height:27px;line-height:27px;background:#0080ff;">意甲</div>
<div class="c dt" style="left:73px;top:697px;width:77px;height:27px;line-height:27px;background:#fff;">24-09-15</div>
<div class="c tm" style="left:151px;top:697px;width:77px;height:27px;line-height:27px;background:#fff;"><span style="color:#008000">恩波利</span></div>
<div class="c dt" style="left:229px;top:697px;width:90px;height:27px;line-height:27px;background:#fff;"><span style="color:#f00">0-0</span>(0-0)</div>
<div class="c dt" style="left:320px;top:697px;width:40px;height:27px;line-height:27px;background:#fff;">4-8</div>
<div class="c tm" style="left:361px;top:697px;width:77px;height:27px;line-height:27px;background:#fff;">尤文图斯</div>
<div class="c od" style="left:439px;top:697px;width:46px;height:27px;line-height:27px;background:#fdf9f6;">1.11</div>
<div class="c hc" style="left:486px;top:697px;width:67px;height:27px;line-height:27px;background:#fdf9f6;"><span style="color:#f00">*</span>半/一</div>
<div class="c od" style="left:554px;top:697px;width:46px;height:27px;line-height:27px;background:#fdf9f6;">0.79</div>
<div class="c od" style="left:601px;top:697px;width:65px;height:27px;line-height:27px;background:#f0f7fc;">5.67</div>
<div class="c od2" style="left:667px;top:697px;width:65px;height:27px;line-height:27px;background:#f0f7fc;">3.68</div>
<div class="c od" style="left:733px;top:697px;width:66px;height:27px;line-height:27px;background:#f0f7fc;">1.65</div>
<div class="c rs" style="left:800px;top:697px;width:40px;height:27px;line-height:27px;background:#fff;"><span style="color:#00f">平</span></div>
<div class="c rs" style="left:841px;top:697px;width:40px;height:27px;line-height:27px;background:#fff;"><span style="color:#f00">赢</span></div>
<div class="c rs" style="left:882px;top:697px;width:58px;height:27px;line-height:27px;background:#fff;"><span style="color:#008000">小</span></div>
<div class="c ty" style="left:32px;top:725px;width:40px;height:27px;line-height:27px;background:#0080ff;">意甲</div>
<div class="c dt" style="left:73px;top:725px;width:77px;height:27px;line-height:27px;background:#efefef;">24-09-01</div>
<div class="c tm" style="left:151px;top:725px;width:77px;height:27px;line-height:27px;background:#efefef;">博洛尼亚</div>
<div class="c dt" style="left:229px;top:725px;width:90px;height:27px;line-height:27px;background:#efefef;"><span style="color:#f00">1-1</span>(1-1)</div>
<div class="c dt" style="left:320px;top:725px;width:40px;height:27px;line-height:27px;background:#efefef;">6-3</div>
<div class="c tm" style="left:361px;top:725px;width:77px;height:27px;line-height:27px;background:#efefef;"><span style="color:#008000">恩波利</span></div>
<div class="c od" style="left:439px;top:725px;width:46px;height:27px;line-height:27px;background:#fdf9f6;">0.96</div>
<div class="c hc" style="left:486px;top:725px;width:67px;height:27px;line-height:27px;background:#fdf9f6;">半/一</div>
<div class="c od" style="left:554px;top:725px;width:46px;height:27px;line-height:27px;background:#fdf9f6;">0.93</div>
<div class="c od" style="left:601px;top:725px;width:65px;height:27px;line-height:27px;background:#f0f7fc;">1.69</div>
<div class="c od2" style="left:667px;top:725px;width:65px;height:27px;line-height:27px;background:#f0f7fc;">3.60</div>
<div class="c od" style="left:733px;top:725px;width:66px;height:27px;line-height:27px;background:#f0f7fc;">5.42</div>
<div class="c rs" style="left:800px;top:725px;width:40px;height:27px;line-height:27px;background:#efefef;"><span style="color:#00f">平</span></div>
<div class="c rs" style="left:841px;top:725px;width:40px;height:27px;line-height:27px;background:#efefef;"><span style="color:#f00">赢</span></div>
<div class="c rs" style="left:882px;top:725px;width:58px;height:27px;line-height:27px;background:#efefef;"><span style="color:#008000">小</span></div>
<div class="c sum" style="left:32px;top:753px;width:908px;height:27px;line-height:27px;background:#fff;">近<span style="color:#f00">10</span>场,胜3平4负3, 胜率:<span class="gbox">30%</span> 赢率:<span class="gbox" style="background:#f00">70%</span> 大:<span class="gbox">30%</span> 单率:<span style="color:#33f">50%</span></div>
<div class="sel" style="left:468px;top:58px;width:60px;height:20px;line-height:18px;font-size:13px"><span>Crow*</span><svg width="10" height="7" viewBox="0 0 10 7"><path d="M1 1.2 L5 5.2 L9 1.2" fill="none" stroke="#000" stroke-width="2"/></svg></div>
<div class="sel" style="left:535px;top:58px;width:36px;height:20px;line-height:18px;font-size:12px"><span>终</span><svg width="10" height="7" viewBox="0 0 10 7"><path d="M1 1.2 L5 5.2 L9 1.2" fill="none" stroke="#000" stroke-width="2"/></svg></div>
<div class="sel" style="left:637px;top:58px;width:83px;height:20px;line-height:18px;font-size:12px"><span>胜平负均值</span><svg width="10" height="7" viewBox="0 0 10 7"><path d="M1 1.2 L5 5.2 L9 1.2" fill="none" stroke="#000" stroke-width="2"/></svg></div>
<div class="sel" style="left:728px;top:58px;width:36px;height:20px;line-height:18px;font-size:12px"><span>终</span><svg width="10" height="7" viewBox="0 0 10 7"><path d="M1 1.2 L5 5.2 L9 1.2" fill="none" stroke="#000" stroke-width="2"/></svg></div>
<div class="sel" style="left:846px;top:58px;width:48px;height:20px;line-height:18px;font-size:12px"><span>全场</span><svg width="10" height="7" viewBox="0 0 10 7"><path d="M1 1.2 L5 5.2 L9 1.2" fill="none" stroke="#000" stroke-width="2"/></svg></div>
<div class="sel" style="left:468px;top:433px;width:60px;height:20px;line-height:18px;font-size:13px"><span>Crow*</span><svg width="10" height="7" viewBox="0 0 10 7"><path d="M1 1.2 L5 5.2 L9 1.2" fill="none" stroke="#000" stroke-width="2"/></svg></div>
<div class="sel" style="left:535px;top:433px;width:36px;height:20px;line-height:18px;font-size:12px"><span>终</span><svg width="10" height="7" viewBox="0 0 10 7"><path d="M1 1.2 L5 5.2 L9 1.2" fill="none" stroke="#000" stroke-width="2"/></svg></div>
<div class="sel" style="left:637px;top:433px;width:83px;height:20px;line-height:18px;font-size:12px"><span>胜平负均值</span><svg width="10" height="7" viewBox="0 0 10 7"><path d="M1 1.2 L5 5.2 L9 1.2" fill="none" stroke="#000" stroke-width="2"/></svg></div>
<div class="sel" style="left:728px;top:433px;width:36px;height:20px;line-height:18px;font-size:12px"><span>终</span><svg width="10" height="7" viewBox="0 0 10 7"><path d="M1 1.2 L5 5.2 L9 1.2" fill="none" stroke="#000" stroke-width="2"/></svg></div>
<div class="sel" style="left:846px;top:433px;width:48px;height:20px;line-height:18px;font-size:12px"><span>全场</span><svg width="10" height="7" viewBox="0 0 10 7"><path d="M1 1.2 L5 5.2 L9 1.2" fill="none" stroke="#000" stroke-width="2"/></svg></div>
<div style="left:31px;top:31px;width:910px;height:1px;background:#e9ebef"></div>
<div style="left:948px;top:190px;width:12px;height:32px;background:#1b93d6;border-radius:4px"></div>
</body></html>
